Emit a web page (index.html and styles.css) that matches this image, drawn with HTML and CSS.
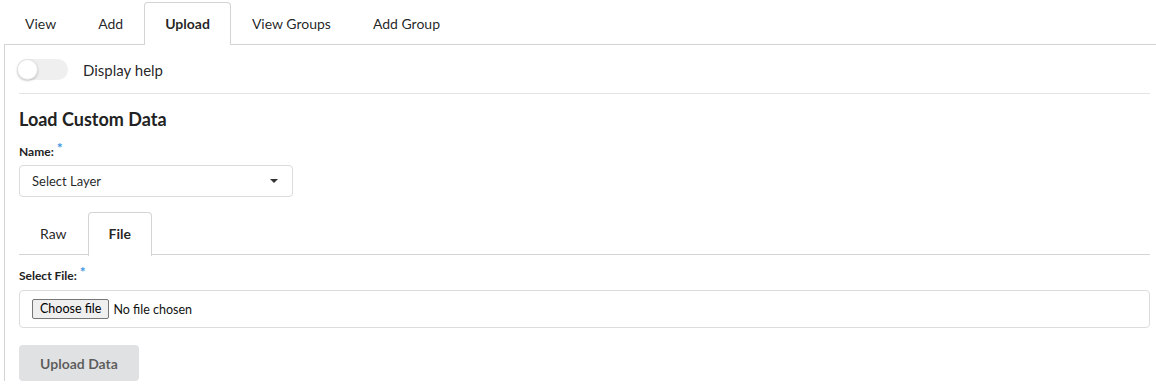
FILE: index.html
```html
<!DOCTYPE html>
<html lang="en">
<head>
    <meta charset="UTF-8">
    <meta name="viewport" content="width=device-width, initial-scale=1.0">
    <title>Upload Data</title>
    <link rel="stylesheet" href="styles.css">
</head>
<body>

    <!-- Main tabs -->
    <div class="page">
        <ul class="tabs">
            <li class="tab">View</li>
            <li class="tab">Add</li>
            <li class="tab active">Upload</li>
            <li class="tab">View Groups</li>
            <li class="tab">Add Group</li>
        </ul>

        <div class="panel">
            <!-- Help toggle -->
            <div class="help-row">
                <span class="toggle"><span class="knob"></span></span>
                <span class="help-label">Display help</span>
            </div>

            <h2 class="title">Load Custom Data</h2>

            <label class="field-label">Name:<span class="req">*</span></label>
            <div class="select">
                <span>Select Layer</span>
                <span class="caret"></span>
            </div>

            <!-- Raw / File tabs -->
            <ul class="tabs sub-tabs">
                <li class="tab">Raw</li>
                <li class="tab active">File</li>
            </ul>

            <label class="field-label">Select File:<span class="req">*</span></label>
            <div class="file-box">
                <label class="file-btn">Choose file<input type="file" class="file-input"></label>
                <span class="file-name">No file chosen</span>
            </div>

            <button class="upload-btn" disabled>Upload Data</button>
        </div>
    </div>

</body>
</html>
```

FILE: styles.css
```css
body {
    font-family: Lato, "Open Sans", sans-serif;
    margin: 0;
    padding: 0;
    background-color: #fff;
    color: rgba(0, 0, 0, 0.87);
    overflow: hidden;
}

.page {
    padding: 2px 0 0 4px;
}

.tabs {
    list-style-type: none;
    margin: 0;
    padding: 0;
    display: flex;
    height: 42px;
}

.tab {
    padding: 0 20px;
    font-size: 14px;
    line-height: 42px;
    border: 1px solid transparent;
    border-bottom: none;
    border-radius: 4px 4px 0 0;
    margin-bottom: -1px;
    background: transparent;
}

.tab.active {
    border-color: #d4d4d5;
    background-color: #fff;
    font-weight: bold;
    height: 42px;
    position: relative;
    z-index: 1;
}

.panel {
    border-top: 1px solid #d4d4d5;
    border-left: 1px solid #d4d4d5;
    padding: 0 6px 0 14px;
    display: flex;
    flex-direction: column;
    align-items: flex-start;
}

.help-row {
    display: flex;
    align-items: center;
    align-self: stretch;
    padding: 14px 0 13px 0;
    border-bottom: 1px solid #e5e5e5;
}

.toggle {
    position: relative;
    width: 51px;
    height: 21px;
    margin-left: -2px;
    border-radius: 11px;
    background-color: #efefef;
}

.knob {
    position: absolute;
    left: 0;
    top: 0;
    width: 21px;
    height: 21px;
    border-radius: 50%;
    background-color: #fff;
    box-shadow: 0 1px 2px rgba(34, 36, 38, 0.25), 0 0 0 1px rgba(34, 36, 38, 0.12) inset;
}

.help-label {
    margin-left: 15px;
    font-size: 15px;
}

.title {
    font-size: 18px;
    font-weight: bold;
    margin: 14px 0 0 0;
    line-height: 23px;
    color: #222;
}

.field-label {
    font-size: 12px;
    font-weight: bold;
    color: #222;
    margin-top: 12px;
    line-height: 16px;
}

.req {
    color: #3d97e0;
    font-size: 14px;
    margin-left: 3px;
    position: relative;
    top: -3px;
}

.select {
    margin-top: 5px;
    width: 274px;
    height: 32px;
    box-sizing: border-box;
    border: 1px solid #dcdcdc;
    border-radius: 4px;
    padding: 0 12px;
    display: flex;
    align-items: center;
    justify-content: space-between;
    font-size: 13px;
}

.caret {
    width: 0;
    height: 0;
    border-left: 4px solid transparent;
    border-right: 4px solid transparent;
    border-top: 4px solid #333;
    margin-right: 2px;
}

.sub-tabs {
    margin-top: 15px;
    align-self: stretch;
    border-bottom: 1px solid #d4d4d5;
    height: 42px;
}

.sub-tabs .tab {
    line-height: 42px;
    height: 42px;
}

.sub-tabs .tab.active {
    height: 43px;
}

.sub-tabs + .field-label {
    margin-top: 12px;
}

.file-box {
    margin-top: 6px;
    align-self: stretch;
    height: 38px;
    box-sizing: border-box;
    border: 1px solid #dcdcdc;
    border-radius: 4px;
    padding: 0 12px;
    display: flex;
    align-items: center;
    font-size: 12px;
}

.file-btn {
    display: inline-block;
    background-color: #efefef;
    border: 1px solid #767676;
    border-radius: 2px;
    padding: 0 7px;
    height: 20px;
    line-height: 18px;
    box-sizing: border-box;
    font-size: 12.5px;
    color: #000;
}

.file-input {
    display: none;
}

.file-name {
    margin-left: 4px;
    font-size: 12.5px;
    color: #111;
}

.upload-btn {
    margin-top: 17px;
    width: 120px;
    height: 36px;
    border: none;
    border-radius: 4px;
    background-color: #e0e1e2;
    color: rgba(0, 0, 0, 0.6);
    font-family: Lato, sans-serif;
    font-size: 14px;
    font-weight: bold;
}
```
